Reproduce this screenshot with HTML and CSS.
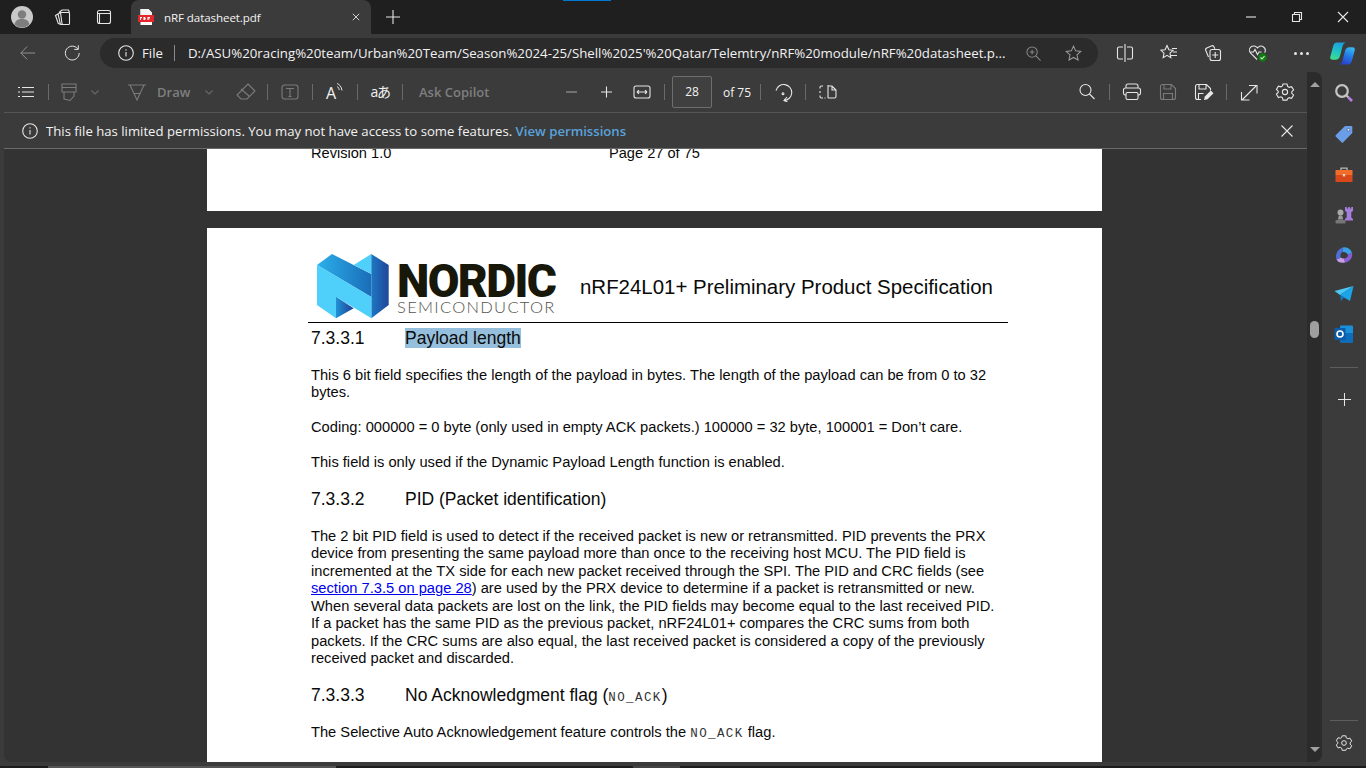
FILE: index.html
```html
<!DOCTYPE html>
<html lang="en">
<head>
  <meta charset="UTF-8">
  <title>nRF datasheet.pdf</title>
  <link rel="stylesheet" href="styles.css">
</head>
<body>
  <svg class="sprites" aria-hidden="true">
    <symbol id="gear" viewBox="0 0 20 20"><path d="M8 2h4l.6 2.400 1.600.9 2.400-.7 2 3.400-1.800 1.700v1.600l1.800 1.700-2 3.400-2.400-.7-1.600.9L12 18.100H8l-.6-2.400-1.600-.9-2.400.7-2-3.400 1.800-1.700V9.200L1.400 7.500l2-3.400 2.400.7 1.600-.9z"/><circle cx="10" cy="10" r="2.600"/></symbol>
    <symbol id="save" viewBox="0 0 20 20"><path d="M2.500 4.500a2 2 0 0 1 2-2h9l4 4v9a2 2 0 0 1-2 2h-11a2 2 0 0 1-2-2zM6 2.500v4.500h7V2.500M5.500 17.500v-6h9v6"/></symbol>
  </svg>

  <header class="tabstrip">
    <div class="avatar"><svg viewBox="0 0 22 22"><circle cx="11" cy="11" r="11" fill="#c9c9c9"/><circle cx="11" cy="8.500" r="4.200" fill="#7d7d7d"/><path d="M3.500 18.500c1-4.500 4-5.500 7.500-5.500s6.500 1 7.500 5.500a11 11 0 0 1-15 0z" fill="#7d7d7d"/></svg></div>
    <button class="strip-btn workspaces"><svg class="ico" viewBox="0 0 20 20"><path d="M8.500 5.500h8a1 1 0 0 1 1 1v10a1 1 0 0 1-1 1h-5.500a1 1 0 0 1-1-.8zM8.500 5.500 6 7l2.500 10.500H11M6 7 3.500 8.500l2.800 8 3.200 1M7 5.500 10 3h6.500l1 2.500"/></svg></button>
    <button class="strip-btn vtabs"><svg class="ico" viewBox="0 0 20 20"><rect x="3.500" y="3.500" width="13" height="13" rx="2"/><path d="M3.500 6.500h13M5.500 6.500v10"/></svg></button>
    <div class="tab">
      <svg class="pdf-ico" viewBox="0 0 16 16"><path d="M2.500 0h8l3.500 3.500V16h-11.500z" fill="#fff"/><rect y="6" width="16" height="7" fill="#e2282c"/><path d="M2.500 0h8v3.500h3.500v2.500h-11.500z" fill="#f3f3f3"/><path d="M2 8h2v1.300h-1.200V11H2zM5.500 8h1.500l.8 1.500L7 11H5.500zM9.500 8h2.500v1h-1.500v.5h1.300v.8h-1.300V11h-1z" fill="#fff"/></svg>
      <span class="tab-title">nRF datasheet.pdf</span>
      <svg class="tab-close" viewBox="0 0 10 10"><path d="M1 1l8 8M9 1l-8 8"/></svg>
    </div>
    <svg class="tab-plus" viewBox="0 0 14 14"><path d="M7 0v14M0 7h14"/></svg>
    <span class="drag-mark"></span>
    <div class="window-btns">
      <svg viewBox="0 0 12 12"><path d="M1 6h10"/></svg>
      <svg viewBox="0 0 12 12"><path d="M1.500 3.500h7v7h-7zM3.500 3.500v-2h7v7h-2"/></svg>
      <svg viewBox="0 0 12 12"><path d="M1 1l10 10M11 1l-10 10"/></svg>
    </div>
  </header>

  <nav class="navbar">
    <svg class="nav-ico back" viewBox="0 0 20 20"><path d="M18 10H2M9 3l-7 7 7 7"/></svg>
    <svg class="nav-ico refresh" viewBox="0 0 20 20"><path d="M16.500 5.500A7.700 7.700 0 1 0 18 10M17 1.500v4.500h-4.500"/></svg>
    <div class="address">
      <svg class="addr-info" viewBox="0 0 16 16"><circle cx="8" cy="8" r="7.300"/><path d="M8 7v4.500M8 4.300v1.200"/></svg>
      <span class="addr-file">File</span>
      <span class="addr-sep"></span>
      <span class="addr-url">D:/ASU%20racing%20team/Urban%20Team/Season%2024-25/Shell%2025'%20Qatar/Telemtry/nRF%20module/nRF%20datasheet.p...</span>
      <svg class="addr-zoom" viewBox="0 0 16 16"><circle cx="6.500" cy="6.500" r="5.500"/><path d="M4 6.500h5M6.500 4v5M10.500 10.500l5 5"/></svg>
      <svg class="addr-star" viewBox="0 0 18 18"><path d="M9 1.200l2.300 5 5.400.6-4 3.700 1.100 5.400L9 13.200l-4.800 2.700 1.100-5.400-4-3.700 5.400-.6z"/></svg>
    </div>
    <div class="nav-tools">
      <svg viewBox="0 0 18 18"><path d="M9 0v18M7 3H3a1.500 1.500 0 0 0-1.500 1.500v9A1.500 1.500 0 0 0 3 15h4M11 3h4a1.500 1.500 0 0 1 1.500 1.500v9A1.500 1.500 0 0 1 15 15h-4"/></svg>
      <svg viewBox="0 0 18 18"><path d="M7 1.500l1.900 4.300 4.100.5-3 2.800.8 4.500L7 11.300l-3.800 2.300.8-4.500-3-2.800 4.100-.5zM12 4.500h5M13 8h4M11 11.500h6"/></svg>
      <svg viewBox="0 0 18 18"><path d="M4.500 13 1.800 6.500a2 2 0 0 1 1-2.600l4.500-2a2 2 0 0 1 2.600.9l1 2"/><rect x="6" y="5.500" width="10.500" height="11" rx="2"/><path d="M11.200 8v6M8.200 11h6"/></svg>
      <svg class="health" viewBox="0 0 20 20"><path d="M9 16.500 2.700 10.200a4.200 4.200 0 0 1 6-6L9.500 5l.8-.8a4.200 4.200 0 0 1 6.300 5.400M1.500 9h4l1.500-2.500 2.500 5 1.500-2.500h2.500"/><circle cx="14.500" cy="14.500" r="4.200" fill="#107c10" stroke="none"/><path d="M12.500 14.500l1.500 1.500 2.500-2.800" stroke="#cfe8cf"/></svg>
      <span class="dots"><i></i><i></i><i></i></span>
      <svg class="copilot" viewBox="0 0 24 24"><defs><linearGradient id="cp1" x1="0.600" y1="0" x2="0.300" y2="1"><stop offset="0" stop-color="#1b9fe0"/><stop offset="0.6" stop-color="#22c9c0"/><stop offset="1" stop-color="#3fdc8a"/></linearGradient><linearGradient id="cp2" x1="0.700" y1="0" x2="0.300" y2="1"><stop offset="0" stop-color="#35b8f0"/><stop offset="0.5" stop-color="#2277e8"/><stop offset="1" stop-color="#2a3fc8"/></linearGradient></defs><path d="M6.500 1.500h9c-2.200.5-3.100 2-3.600 4l-2.300 9c-.6 2.300-2.100 3.500-4.100 3.500H2.300C.7 18 -.2 16.800.3 15L3 5c.6-2.300 1.800-3.500 3.500-3.500z" fill="url(#cp1)"/><path d="M17.500 22.500h-9c2.200-.5 3.100-2 3.600-4l2.300-9c.6-2.300 2.100-3.500 4.100-3.500h3.200c1.600 0 2.500 1.200 2 3L21 19c-.6 2.300-1.800 3.500-3.500 3.500z" fill="url(#cp2)"/></svg>
    </div>
  </nav>

  <div class="workspace">
    <main class="panel">
      <div class="panel-main">
        <div class="pdfbar">
          <svg class="btn ico" viewBox="0 0 36 20"><path d="M14 5.500h12M14 10h12M14 14.500h12M10 5.500h2M10 10h2M10 14.500h2"/></svg>
          <span class="sep"></span>
          <svg class="btn-w32 ico off" viewBox="0 0 32 20"><path d="M9 2h14v8H9zM9 5.500h14M11 10v7l6 1.500 4-4.500v-4"/></svg>
          <svg class="btn-chev ico faint" viewBox="0 0 20 20"><path d="M6.500 8.500 10 12l3.500-3.500"/></svg>
          <svg class="btn-w32 draw ico off" viewBox="0 0 32 20"><path d="M7 3h18M9 3l7 15 7-15M13.500 11.500h5"/></svg>
          <span class="off-label draw-label">Draw</span>
          <svg class="btn-chev draw-chev ico faint" viewBox="0 0 20 20"><path d="M6.500 8.500 10 12l3.500-3.500"/></svg>
          <svg class="btn eraser ico off" viewBox="0 0 36 20"><path d="M21 2l7 7-8 8h-6l-4-4zM14 7l8 7"/></svg>
          <span class="sep"></span>
          <svg class="btn ico off" viewBox="0 0 36 20"><rect x="10" y="3" width="16" height="14" rx="2.500"/><path d="M14 6.500h8M18 6.500v8M16.500 14.500h3"/></svg>
          <span class="sep"></span>
          <div class="btn read"><span class="read-a">A</span><svg viewBox="0 0 8 8"><path d="M1 .5c2.500 1 4.500 3 5 7M1 3.500c1 .5 2 1.500 2.200 3.500"/></svg></div>
          <span class="sep"></span>
          <div class="btn translate">aあ</div>
          <span class="sep"></span>
          <span class="off-label ask">Ask Copilot</span>
          <svg class="btn zoom-out ico dim" viewBox="0 0 36 20"><path d="M13 10h11"/></svg>
          <svg class="btn-plus ico" viewBox="0 0 35 20"><path d="M12 10h11M17.500 4.500v11"/></svg>
          <svg class="btn ico fit" viewBox="0 0 36 20"><rect x="10" y="4" width="16" height="12" rx="2"/><path d="M13 10h10M13 10l2-1.800M13 10l2 1.800M23 10l-2-1.800M23 10l-2 1.800"/></svg>
          <span class="sep"></span>
          <span class="page-input">28</span>
          <span class="page-total">of 75</span>
          <span class="sep sep-total"></span>
          <svg class="btn ico" viewBox="0 0 36 20"><path d="M11 8.500a8 8 0 1 1 8 10M22 15l-3 3.500 3.500 1.500M18 10.800a.9.9 0 1 0 .01 0z"/></svg>
          <span class="sep"></span>
          <svg class="btn ico" viewBox="0 0 36 20"><path d="M13 4h-1.500a1.500 1.500 0 0 0-1.500 1.500v1M10 9v2M10 13.500v1a1.500 1.500 0 0 0 1.500 1.500H13M15.500 16h-1M18 3v13M18 4h4l4 4v6.500a1.500 1.500 0 0 1-1.500 1.500H18M22 4v4h4"/></svg>
          <div class="pdfbar-right">
            <svg class="btn ico" viewBox="0 0 36 20"><circle cx="16.500" cy="8" r="5.500"/><path d="M20.500 12l5 5"/></svg>
            <span class="sep"></span>
            <svg class="btn ico" viewBox="0 0 36 20"><path d="M12 13H11a2 2 0 0 1-1.500-2V8a2 2 0 0 1 2-2h13a2 2 0 0 1 2 2v3a2 2 0 0 1-1.500 2H24M12 6V4a2 2 0 0 1 2-2h8a2 2 0 0 1 2 2v2"/><rect x="12" y="10.500" width="12" height="7" rx="1.500"/></svg>
            <svg class="btn ico off"><use href="#save" x="8" y="0" width="20" height="20"/></svg>
            <svg class="btn ico" viewBox="0 0 36 20"><path d="M15 17.500h-3.500a2 2 0 0 1-2-2v-11a2 2 0 0 1 2-2h9l4 4v2M13 2.500V7h7V2.500M12.500 17.500v-6h5"/><path d="M18 18l.8-3.500 6-6 2.700 2.700-6 6z" fill="#e8e8e8" stroke="none"/></svg>
            <span class="sep"></span>
            <svg class="btn ico" viewBox="0 0 36 20"><path d="M11 18 25 4M18 3.500h8v8M10.500 10v8h8"/></svg>
            <svg class="btn ico"><use href="#gear" x="8" y="0" width="20" height="20"/></svg>
          </div>
        </div>
        <div class="infobar">
          <svg class="info-ico" viewBox="0 0 16 16"><circle cx="8" cy="8" r="7.300"/><path d="M8 7v4.500M8 4.300v1.200"/></svg>
          <span class="info-text">This file has limited permissions. You may not have access to some features. <a class="info-link">View permissions</a></span>
          <svg class="info-close" viewBox="0 0 12 12"><path d="M.5.500l11 11M11.500.500l-11 11"/></svg>
        </div>
        <div class="viewer">
          <section class="page page-prev">
            <div class="page-foot"><span class="foot-rev">Revision 1.0</span><span>Page 27 of 75</span></div>
          </section>
          <section class="page page-cur">
            <div class="page-head">
              <svg class="nordic-mark" viewBox="0 0 72 65">
                <defs>
                  <linearGradient id="nd-band"><stop offset="0" stop-color="#2bb0ea"/><stop offset="1" stop-color="#1a6db8"/></linearGradient>
                  <linearGradient id="nd-right"><stop offset="0" stop-color="#1d78c2"/><stop offset="1" stop-color="#21469a"/></linearGradient>
                  <linearGradient id="nd-notch"><stop offset="0" stop-color="#1f93d6"/><stop offset="1" stop-color="#1f3f96"/></linearGradient>
                </defs>
                <path d="M0 11 15 0l39.300 20v23z" fill="url(#nd-band)"/>
                <path d="M36.700 11 54.300 0v20z" fill="#4fd0fa"/>
                <path d="M54.300 0 71.700 11v40L54.300 64.300z" fill="url(#nd-right)"/>
                <path d="M0 11 54.300 43v21.300L19 42.700v21.600L0 51z" fill="#4fd0fa"/>
                <path d="M19 42.700 36.700 54.300 19 64.300z" fill="url(#nd-notch)"/>
              </svg>
              <div class="nordic-word">
                <span class="nordic-name">NORDIC</span>
                <span class="nordic-sub">SEMICONDUCTOR</span>
              </div>
              <span class="doc-title">nRF24L01+ Preliminary Product Specification</span>
            </div>
            <div class="page-rule"></div>
            <article class="page-body">
              <h3 class="sec sec-first"><span class="sec-num">7.3.3.1</span><span class="hl">Payload length</span></h3>
              <p class="para">This 6 bit field specifies the length of the payload in bytes. The length of the payload can be from 0 to 32<br>bytes.</p>
              <p class="para">Coding: 000000 = 0 byte (only used in empty ACK packets.) 100000 = 32 byte, 100001 = Don’t care.</p>
              <p class="para">This field is only used if the Dynamic Payload Length function is enabled.</p>
              <h3 class="sec"><span class="sec-num">7.3.3.2</span>PID (Packet identification)</h3>
              <p class="para">The 2 bit PID field is used to detect if the received packet is new or retransmitted. PID prevents the PRX<br>device from presenting the same payload more than once to the receiving host MCU. The PID field is<br>incremented at the TX side for each new packet received through the SPI. The PID and CRC fields (see<br><a class="doc-link">section 7.3.5 on page 28</a>) are used by the PRX device to determine if a packet is retransmitted or new.<br>When several data packets are lost on the link, the PID fields may become equal to the last received PID.<br>If a packet has the same PID as the previous packet, nRF24L01+ compares the CRC sums from both<br>packets. If the CRC sums are also equal, the last received packet is considered a copy of the previously<br>received packet and discarded.</p>
              <h3 class="sec"><span class="sec-num">7.3.3.3</span>No Acknowledgment flag (<code>NO_ACK</code>)</h3>
              <p class="para">The Selective Auto Acknowledgement feature controls the <code>NO_ACK</code> flag.</p>
            </article>
          </section>
        </div>
      </div>
      <div class="scrollbar">
        <span class="arrow-up"></span>
        <span class="thumb"></span>
        <span class="arrow-down"></span>
      </div>
    </main>

    <aside class="sidebar">
      <svg viewBox="0 0 20 20"><circle cx="8" cy="8" r="5.800" fill="none" stroke="#c4c4c4" stroke-width="2.200"/><path d="M12.500 12.500l2 2" stroke="#c4c4c4" stroke-width="2"/><path d="M14.500 14.500l3.500 3.500" stroke="#b67fe0" stroke-width="2.600"/></svg>
      <svg class="side-down" viewBox="0 0 20 20"><path d="M11 2h6.500a.8.800 0 0 1 .8.800V9L9 18.500a1 1 0 0 1-1.300 0L1.700 12.500a1 1 0 0 1 0-1.300z" fill="#6a9ee8"/><circle cx="14.500" cy="5.800" r="1.400" fill="#e8f0fb" stroke="#33466b" stroke-width=".6"/></svg>
      <svg class="side-down" viewBox="0 0 20 20"><path d="M7 5V3.200h6V5" fill="none" stroke="#b9b9b9" stroke-width="1.300"/><path d="M1.500 5h17v5h-17z" fill="#f26c2a"/><path d="M1.500 10h17v7h-17z" fill="#d8481a"/><rect x="8.800" y="9" width="2.400" height="2.400" fill="#f7d6c2"/></svg>
      <svg viewBox="0 0 20 20"><circle cx="6.500" cy="7.500" r="3" fill="#a9a9a9"/><path d="M4.800 10.500h3.400l1 4H3.800z" fill="#9a9a9a"/><rect x="1.500" y="15" width="10" height="3.400" rx="1" fill="#767676"/><path d="M11 2h1.800v1.500h1.300V2h1.800v1.500h1.300V2H19v4l-1.700 1v5.500l1.700 1.500v1.500H11V14l1.700-1.500V7L11 6z" fill="#a57ddd"/></svg>
      <svg viewBox="0 0 20 20"><path d="M8.500 2.500a8 8 0 0 1 9.500 5L14 10c-1-2-2.500-3.300-5.500-3z" fill="#3aa0e8"/><path d="M18 7.500c1 5-2 9-7 10L10 13.500c2.500-.3 4-1.500 4-3.500z" fill="#8a5dd6"/><path d="M11 17.500c-4 1-7.500-.5-8.500-3L7 12.500c.6 1 1.800 1.300 3 1z" fill="#c79be8"/><path d="M2.500 14.500C1 10 3 4.500 8.500 2.500v4.500C6.500 8 5.800 10.500 7 12.500z" fill="#4e6fd8"/></svg>
      <svg class="side-up" viewBox="0 0 20 20"><path d="M.5 7 19.500 2 6 11z" fill="#4bc8f5"/><path d="M19.500 2 6 11l10 6z" fill="#1ba4e8"/><path d="M6 11l1 6 3-3.500z" fill="#0e78c4"/></svg>
      <svg viewBox="0 0 20 20"><rect x="6" y="1.500" width="13" height="17" rx="1" fill="#1a8fdb"/><path d="M6 9h13v9.500H7a1 1 0 0 1-1-1z" fill="#0e6cbd"/><rect x=".5" y="4" width="11" height="12" rx="1" fill="#0b5ba8"/><circle cx="6" cy="10" r="3" fill="none" stroke="#fff" stroke-width="1.600"/></svg>
      <span class="side-sep side-sep-top"></span>
      <svg class="side-plus" viewBox="0 0 14 14"><path d="M7 0v14M0 7h14"/></svg>
      <div class="side-foot">
        <span class="side-sep"></span>
        <svg class="side-gear"><use href="#gear" width="18" height="18"/></svg>
      </div>
    </aside>
  </div>
  <footer class="taskstrip"><span class="task-a"></span><span class="task-b"></span></footer>
</body>
</html>
```

FILE: styles.css
```css
* {
  box-sizing: border-box;
}
html, body {
  margin: 0;
  height: 768px;
  overflow: hidden;
}
body {
  width: 1366px;
  background-color: #3b3b3b;
  color: #f2f2f2;
  font-family: "Open Sans", "Noto Sans", sans-serif;
  font-size: 13px;
  display: flex;
  flex-direction: column;
}
svg {
  display: block;
  flex: none;
}
button {
  background: none;
  border: none;
  padding: 0;
}
.sprites {
  width: 0;
  height: 0;
  position: absolute;
}
.ico, .nav-ico, .nav-tools svg, .window-btns svg, .addr-info, .addr-zoom, .addr-star, .tab-close, .tab-plus, .info-ico, .info-close, .side-plus, .side-gear {
  fill: none;
  stroke: #e6e6e6;
  stroke-width: 1.100;
}

/* tab strip */
.tabstrip {
  height: 34px;
  background-color: #1f1f1f;
  display: flex;
  align-items: center;
  position: relative;
  flex: none;
}
.avatar {
  margin-left: 11px;
  width: 22px;
  height: 22px;
}
.strip-btn {
  width: 20px;
  height: 20px;
}
.workspaces {
  margin-left: 19px;
}
.vtabs {
  margin-left: 22px;
}
.tab {
  margin-left: 17px;
  align-self: stretch;
  width: 240px;
  background-color: #3b3b3b;
  border-radius: 8px 8px 0 0;
  display: flex;
  align-items: center;
  padding: 0 11px 0 7px;
}
.pdf-ico {
  width: 16px;
  height: 16px;
}
.tab-title {
  margin-left: 10px;
  font-size: 11.600px;
  letter-spacing: -0.1px;
  flex: 1;
}
.tab-close {
  width: 8px;
  height: 8px;
}
.tab-plus {
  margin-left: 15px;
  width: 14px;
  height: 14px;
}
.drag-mark {
  position: absolute;
  left: 563px;
  top: 0;
  width: 48px;
  height: 1px;
  background-color: #0078d4;
}
.window-btns {
  margin-left: auto;
  display: flex;
  gap: 34px;
  padding-right: 17px;
}
.window-btns svg {
  width: 12px;
  height: 12px;
}

/* address row */
.navbar {
  height: 38px;
  flex: none;
  display: flex;
  align-items: center;
}
.nav-ico {
  width: 18px;
  height: 18px;
}
.back {
  margin-left: 19px;
  opacity: 0.5;
}
.refresh {
  margin-left: 26px;
}
.address {
  margin-left: 19px;
  width: 998px;
  height: 30px;
  border-radius: 15px;
  background-color: #2b2b2b;
  display: flex;
  align-items: center;
  padding-left: 18px;
}
.addr-info {
  width: 16px;
  height: 16px;
}
.addr-file {
  margin-left: 8px;
  width: 25px;
  font-size: 13.200px;
}
.addr-sep {
  margin-left: 7px;
  width: 1px;
  height: 16px;
  background-color: #8a8a8a;
}
.addr-url {
  margin-left: 13px;
  width: 820px;
  font-size: 13.250px;
  white-space: nowrap;
}
.addr-zoom {
  margin-left: 18px;
  width: 15px;
  height: 15px;
  opacity: 0.5;
}
.addr-star {
  margin-left: 24px;
  width: 17px;
  height: 17px;
  opacity: 0.6;
}
.nav-tools {
  margin-left: 18px;
  display: flex;
  align-items: center;
}
.nav-tools svg {
  width: 18px;
  height: 18px;
  margin-right: 26px;
}
.nav-tools .health {
  width: 20px;
  height: 20px;
  margin-right: 26px;
}
.dots {
  display: flex;
  gap: 3px;
  width: 15px;
}
.dots i {
  width: 3px;
  height: 3px;
  border-radius: 50%;
  background-color: #e6e6e6;
}
.nav-tools .copilot {
  margin: 0 0 0 21px;
  width: 25px;
  height: 25px;
  stroke: none;
}

/* main area */
.workspace {
  flex: 1;
  display: flex;
  min-height: 0;
}
.panel {
  margin: 0 0 4px 4px;
  width: 1318px;
  display: flex;
  border-radius: 8px;
  overflow: hidden;
  background-color: #333333;
}
.panel-main {
  width: 1303px;
  display: flex;
  flex-direction: column;
}
.pdfbar {
  height: 41px;
  flex: none;
  padding-left: 4px;
  display: flex;
  align-items: center;
  background-color: #3b3b3b;
  border-bottom: 1px solid #565656;
}
.pdfbar svg {
  height: 20px;
}
.btn {
  width: 36px;
  height: 20px;
  flex: none;
}
.btn-w32 {
  width: 32px;
}
.btn-chev {
  width: 20px;
}
.btn-plus {
  width: 35px;
}
.draw {
  margin-left: 16px;
}
.draw-chev {
  margin-left: 10px;
}
.eraser {
  margin-left: 8px;
}
.off {
  stroke: #7b7b7b;
}
.faint {
  stroke: #666666;
}
.dim {
  stroke: #a6a6a6;
}
.off-label {
  color: #7f7f7f;
  font-size: 13px;
  font-weight: 600;
}
.draw-label {
  margin-left: 4px;
  width: 32px;
}
.ask {
  margin-left: 12px;
  width: 71px;
  white-space: nowrap;
}
.zoom-out {
  margin-left: 63px;
}
.sep {
  width: 1px;
  height: 16px;
  margin: 0 4px;
  background-color: #6a6a6a;
  flex: none;
}
.read {
  display: flex;
  justify-content: center;
  font-size: 16px;
}
.read-a {
  line-height: 22px;
}
.read svg {
  width: 8px;
  height: 8px;
  margin-top: 1px;
  fill: none;
  stroke: #e6e6e6;
}
.translate {
  text-align: center;
  font-family: "Open Sans", "Noto Sans CJK JP", sans-serif;
  font-size: 14px;
  letter-spacing: -1.500px;
  line-height: 20px;
}
.page-input {
  margin-left: 3px;
  width: 40px;
  height: 32px;
  border: 1px solid #6e6e6e;
  border-radius: 2px;
  background-color: #404040;
  text-align: center;
  line-height: 30px;
  font-size: 12px;
}
.page-total {
  margin-left: 11px;
  width: 27px;
  font-size: 12px;
  white-space: nowrap;
}
.sep-total {
  margin-left: 10px;
}
.pdfbar-right {
  margin-left: auto;
  padding-right: 4px;
  display: flex;
  align-items: center;
}

.infobar {
  height: 36px;
  flex: none;
  background-color: #3b3b3b;
  border-bottom: 1px solid #6a6a6a;
  display: flex;
  align-items: center;
  padding: 0 14px 0 18px;
}
.info-ico {
  width: 16px;
  height: 16px;
}
.info-text {
  margin-left: 8px;
  font-size: 13.170px;
  flex: 1;
  white-space: nowrap;
}
.info-link {
  color: #5aa2dc;
  font-weight: 600;
}
.info-close {
  width: 12px;
  height: 12px;
}

/* pdf pages */
.viewer {
  flex: 1;
  min-height: 0;
  overflow: hidden;
  padding-left: 203px;
  background-color: #333333;
  font-family: "Liberation Sans", Arial, sans-serif;
  color: #0a0a0a;
}
.page {
  width: 895px;
  background-color: #ffffff;
}
.page-prev {
  height: 62px;
  margin-bottom: 17px;
  overflow: hidden;
}
.page-foot {
  margin-top: -4px;
  padding-left: 104px;
  font-size: 14.600px;
  line-height: 17px;
  display: flex;
}
.foot-rev {
  width: 298px;
}
.page-cur {
  height: 600px;
  padding-top: 26px;
}
.page-head {
  display: flex;
  margin-left: 110px;
  height: 68px;
}
.nordic-mark {
  width: 72px;
  height: 65px;
}
.nordic-word {
  margin-left: 8px;
  display: flex;
  flex-direction: column;
  width: 160px;
}
.nordic-name {
  font-family: "Roboto", sans-serif;
  font-weight: 900;
  font-size: 46px;
  line-height: 36px;
  margin-top: 9px;
  color: #17170a;
  letter-spacing: -1.600px;
  white-space: nowrap;
}
.nordic-sub {
  font-family: "Lato", sans-serif;
  font-weight: 300;
  font-size: 16.500px;
  line-height: 16px;
  letter-spacing: 1.300px;
  color: #55554d;
  white-space: nowrap;
}
.doc-title {
  margin-left: 23px;
  margin-top: 21px;
  font-size: 20.450px;
  line-height: 24px;
  white-space: nowrap;
}
.page-rule {
  margin-left: 101px;
  width: 700px;
  height: 1px;
  background-color: #000000;
}
.page-body {
  padding-left: 104px;
}
.sec {
  margin: 17.500px 0 18.500px;
  font-weight: 400;
  font-size: 17.500px;
  line-height: 20px;
  white-space: nowrap;
}
.sec-first {
  margin-top: 5px;
  margin-bottom: 18.800px;
}
.sec-num {
  display: inline-block;
  width: 94px;
}
.hl {
  background-color: #95bfdc;
}
.para {
  margin: 17.500px 0;
  font-size: 14.680px;
  line-height: 17.500px;
  white-space: nowrap;
}
.doc-link {
  color: #0000ee;
  text-decoration: underline;
}
code {
  font-family: "Liberation Mono", monospace;
  font-size: 12.500px;
  line-height: 0;
  letter-spacing: 1.400px;
  color: #333333;
}

/* scrollbar and sidebar */
.scrollbar {
  width: 15px;
  background-color: #2b2b2b;
  position: relative;
}
.arrow-up, .arrow-down {
  position: absolute;
  left: 3px;
  width: 0;
  height: 0;
  border-left: 5px solid transparent;
  border-right: 5px solid transparent;
}
.arrow-up {
  top: 10px;
  border-bottom: 5px solid #a0a0a0;
}
.arrow-down {
  bottom: 10px;
  border-top: 5px solid #a0a0a0;
}
.thumb {
  position: absolute;
  left: 3px;
  top: 249px;
  width: 9px;
  height: 17px;
  border-radius: 5px;
  background-color: #9f9f9f;
}
.sidebar {
  width: 44px;
  padding-top: 11px;
  display: flex;
  flex-direction: column;
  align-items: center;
  gap: 20px;
}
.sidebar > svg {
  width: 20px;
  height: 20px;
}
.sidebar > .side-down {
  margin-top: 1px;
}
.sidebar > .side-up {
  margin-top: -1px;
}
.side-sep {
  width: 28px;
  height: 1px;
  background-color: #5e5e5e;
  flex: none;
}
.side-sep-top {
  margin-top: 3px;
}
.sidebar > .side-plus {
  width: 13px;
  height: 13px;
  margin-top: 5px;
}
.side-foot {
  margin-top: auto;
  display: flex;
  flex-direction: column;
  align-items: center;
  gap: 13px;
  padding-bottom: 14px;
}
.side-gear {
  width: 18px;
  height: 18px;
}

.taskstrip {
  height: 2px;
  flex: none;
  background-color: #1c1c1c;
  display: flex;
}
.task-a {
  margin-left: 48px;
  width: 288px;
  background-color: #555555;
}
.task-b {
  margin-left: 297px;
  width: 47px;
  background-color: #444444;
}
```
